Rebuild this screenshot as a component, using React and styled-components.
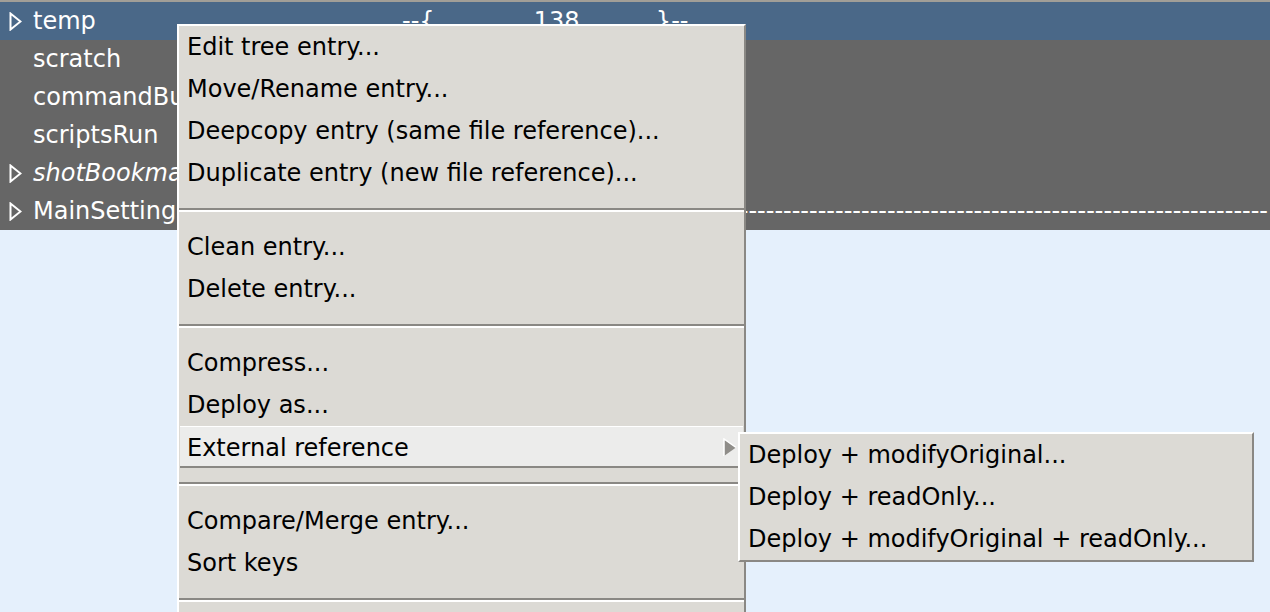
import React from 'react'
import styled, { createGlobalStyle } from 'styled-components';

// page reset + font
const GlobalStyle = createGlobalStyle`
    html, body {
        margin: 0;
        padding: 0;
        overflow: hidden;
        background: #e5f0fc;
    }
    body {
        font-family: "DejaVu Sans", "Liberation Sans", sans-serif;
        font-size: 24px;
    }
`;

const Page = styled.div`
    position: relative;
    width: 1270px;
    height: 612px;
    overflow: hidden;
`;

const TopStrip = styled.div`
    height: 2px;
    background: #a19e97;
`;

const Tree = styled.div`
    background: #666666;
`;

const Row = styled.div`
    display: grid;
    grid-template-columns: 33px 369px 1fr;
    align-items: center;
    height: 38px;
    color: #ffffff;
    background: ${p => (p.$selected ? '#4a6888' : 'transparent')};
    white-space: pre;
    overflow: hidden;
`;

const Toggle = styled.div`
    display: flex;
    align-items: center;
    padding-left: 9px;
    height: 100%;
`;

const Label = styled.span`
    font-style: ${p => (p.$italic ? 'italic' : 'normal')};
    line-height: 38px;
`;

const Value = styled.span`
    line-height: 38px;
    overflow: hidden;
`;

const Menu = styled.div`
    position: absolute;
    top: 24px;
    left: 177px;
    width: 569px;
    box-sizing: border-box;
    background: #dcdad5;
    color: #000;
    border-top: 2px solid #ffffff;
    border-left: 2px solid #ffffff;
    border-right: 2px solid #8a8884;
    border-bottom: 2px solid #8a8884;
`;

const SubMenu = styled(Menu)`
    top: 432px;
    left: 738px;
    width: 516px;
`;

const Item = styled.div`
    position: relative;
    height: 42px;
    line-height: 42px;
    padding-left: 8px;
    white-space: nowrap;
    box-sizing: border-box;
    ${p => p.$active && `
        margin: 0 1px;
        padding-left: 7px;
        background: #ececeb;
        border-top: 1px solid #ffffff;
        border-bottom: 2px solid #8a8884;
        line-height: 42px;
    `}
`;

const Arrow = styled.svg`
    position: absolute;
    right: 6px;
    top: 11px;
`;

const Separator = styled.div`
    margin: 14px 0 14px;
    height: 2px;
    background: #8a8884;
    border-bottom: 2px solid #ffffff;
`;

const Tri = () => (
    <svg width="13" height="19" viewBox="0 0 13 19">
        <polygon points="1.5,1.5 11.5,9.5 1.5,17.5" fill="none" stroke="#fff" strokeWidth="2" />
    </svg>
);

const rows = [
    { label: 'temp', toggle: true, selected: true, value: '--{' + ' '.repeat(13) + '138' + ' '.repeat(10) + '}--' },
    { label: 'scratch' },
    { label: 'commandBuffers' },
    { label: 'scriptsRun' },
    { label: 'shotBookmarks', toggle: true, italic: true },
    { label: 'MainSettings', toggle: true, value: '-'.repeat(100) },
];

const groups = [
    ['Edit tree entry...', 'Move/Rename entry...', 'Deepcopy entry (same file reference)...', 'Duplicate entry (new file reference)...'],
    ['Clean entry...', 'Delete entry...'],
    ['Compress...', 'Deploy as...', 'External reference'],
    ['Compare/Merge entry...', 'Sort keys'],
];

const App = () => {
  return (
    <Page>
        <GlobalStyle />
        <TopStrip />
        <Tree>
            {rows.map(r => (
                <Row key={r.label} $selected={r.selected}>
                    <Toggle>{r.toggle && <Tri />}</Toggle>
                    <Label $italic={r.italic}>{r.label}</Label>
                    <Value>{r.value || ''}</Value>
                </Row>
            ))}
        </Tree>

        <Menu>
            {groups.map((g, i) => (
                <React.Fragment key={i}>
                    {g.map(t => (
                        <Item key={t} $active={t === 'External reference'}>
                            {t}
                            {t === 'External reference' && (
                                <Arrow width="14" height="19" viewBox="0 0 14 19">
                                    <polygon points="1,1 13,9.5 1,18" fill="#8f8d89" />
                                    <polyline points="1,18 1,1 13,9.5" fill="none" stroke="#ffffff" strokeWidth="1.5" />
                                </Arrow>
                            )}
                        </Item>
                    ))}
                    <Separator />
                </React.Fragment>
            ))}
        </Menu>

        <SubMenu>
            <Item>Deploy + modifyOriginal...</Item>
            <Item>Deploy + readOnly...</Item>
            <Item>Deploy + modifyOriginal + readOnly...</Item>
        </SubMenu>
    </Page>
  )
}

export default App
